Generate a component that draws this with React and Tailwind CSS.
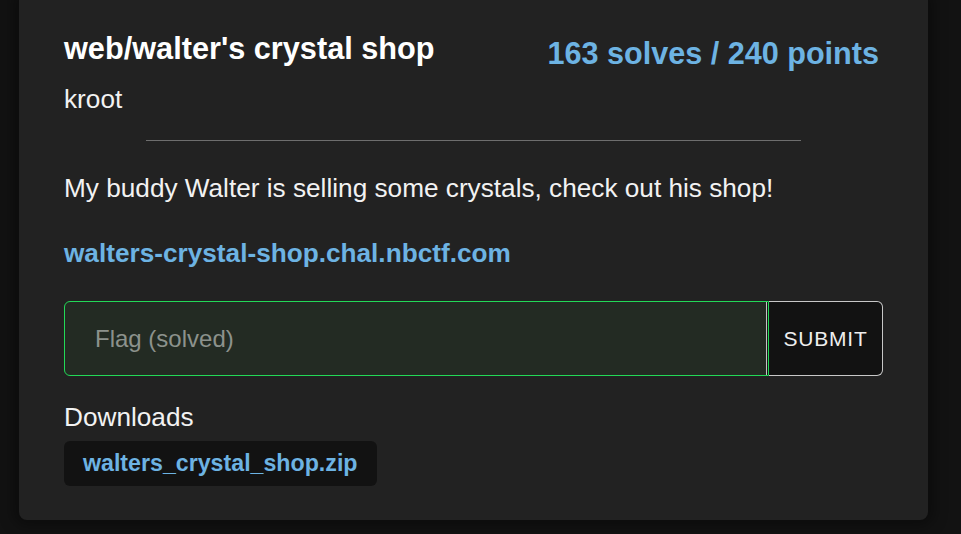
import { useState } from "react";

export default function App() {
    const [flag, setFlag] = useState("");

    return (
        <div className="min-h-[534px] bg-[#121212] font-['Liberation_Sans',Arial,sans-serif] text-[#f2f2f2] overflow-hidden">
            <div className="ml-[19px] w-[909px] bg-[#222222] rounded-b-[8px] shadow-[0_0_14px_6px_rgba(0,0,0,0.35)] px-[45px] pt-[31px] pb-[34px]">
                <div className="flex justify-between items-start">
                    <h1 className="text-[30.7px] leading-[36px] font-bold text-white">
                        web/walter's crystal shop
                    </h1>
                    <span className="mt-[4px] mr-[4px] text-[30.6px] leading-[36px] font-bold text-[#6db3e3]">
                        163 solves / 240 points
                    </span>
                </div>
                <div className="mt-[12px] text-[26.2px] leading-[32px]">kroot</div>

                <div className="mt-[25px] mx-auto w-[80%] h-px bg-[#6e6e6e]" />

                <p className="mt-[31px] text-[26.2px] leading-[32px]">
                    My buddy Walter is selling some crystals, check out his shop!
                </p>
                <a
                    href="#"
                    className="block mt-[33px] text-[26.2px] leading-[32px] font-bold text-[#6db3e3]"
                >
                    walters-crystal-shop.chal.nbctf.com
                </a>

                <form
                    className="mt-[32px] flex h-[75px]"
                    onSubmit={(e) => e.preventDefault()}
                >
                    <input
                        type="text"
                        value={flag}
                        onChange={(e) => setFlag(e.target.value)}
                        placeholder="Flag (solved)"
                        className="flex-1 min-w-0 h-full bg-[#232b23] border border-[#22d957] rounded-l-[6px] pl-[30px] text-[24px] text-[#ddd] placeholder:text-[#8c928c] outline-none shadow-[inset_-1px_0_0_#151515,inset_-2px_0_0_#c4c4c4]"
                    />
                    <button
                        type="submit"
                        className="w-[114px] h-full bg-[#121212] border border-l-0 border-[#c8c8c8] rounded-r-[6px] text-[21px] tracking-[0.8px] text-[#eeeeee]"
                    >
                        SUBMIT
                    </button>
                </form>

                <div className="mt-[25px] text-[26.2px] leading-[32px]">Downloads</div>
                <div className="mt-[8px] flex">
                    <a
                        href="#"
                        className="h-[45px] px-[19px] rounded-[6px] bg-[#121212] text-[23.2px] leading-[45px] font-bold text-[#6db3e3]"
                    >
                        walters_crystal_shop.zip
                    </a>
                </div>
            </div>
        </div>
    );
}
